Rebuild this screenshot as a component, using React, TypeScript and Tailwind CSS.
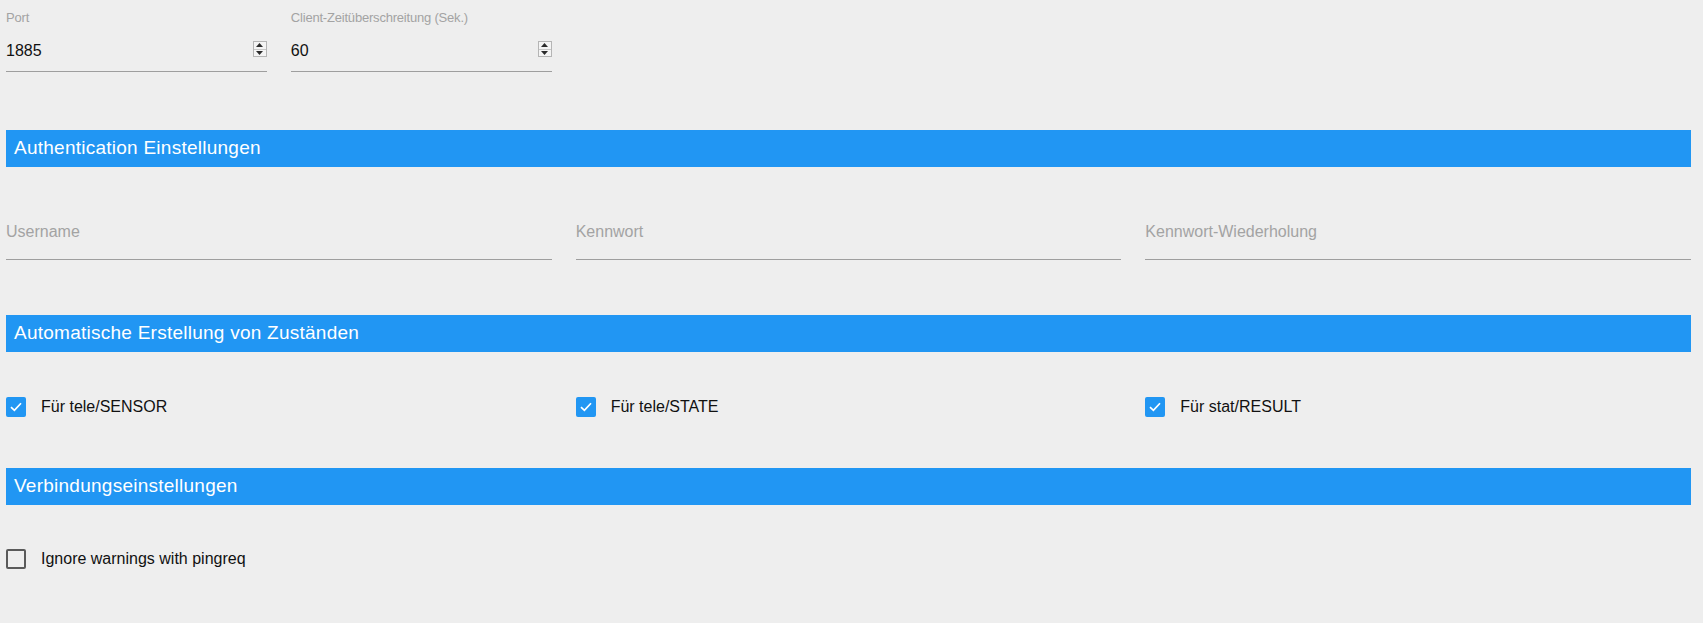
const font = { fontFamily: '"Liberation Sans", Arial, sans-serif' };

const Spinner = () => (
    <div className="flex flex-col w-[14px] h-[16px] border border-[#b5b5b5] bg-[#f4f4f4] -mt-[4px]">
        <div className="flex-1 flex items-center justify-center border-b border-[#c8c8c8]">
            <svg width="7" height="4" viewBox="0 0 7 4"><path d="M3.5 0 L7 4 L0 4 Z" fill="#2b2b2b" /></svg>
        </div>
        <div className="flex-1 flex items-center justify-center">
            <svg width="7" height="4" viewBox="0 0 7 4"><path d="M0 0 L7 0 L3.5 4 Z" fill="#2b2b2b" /></svg>
        </div>
    </div>
);

const NumberField = ({ label, value }: { label: string; value: string }) => (
    <div className="pt-[10px]">
        <div className="text-[13px] leading-[16px] text-[#a3a3a3] tracking-[-0.2px]">{label}</div>
        <div className="mt-[13px] pb-[8px] border-b border-[#9e9e9e] flex items-center justify-between h-[33px]">
            <span className="text-[16px] leading-[24px] text-[#111]">{value}</span>
            <Spinner />
        </div>
    </div>
);

const TextField = ({ label }: { label: string }) => (
    <div className="pb-[17px] border-b border-[#9e9e9e]">
        <div className="text-[16px] leading-[20px] text-[#a3a3a3]">{label}</div>
    </div>
);

const Header = ({ title }: { title: string }) => (
    <div className="h-[37px] bg-[#2196f3] flex items-center pl-[8px]">
        <span className="text-[19px] tracking-[0.25px] text-white">{title}</span>
    </div>
);

const Checkbox = ({ checked, label }: { checked: boolean; label: string }) => (
    <div className="flex items-center h-[24px] gap-[15px]">
        {checked ? (
            <div className="w-[20px] h-[20px] rounded-[2px] bg-[#2196f3] flex items-center justify-center">
                <svg width="14" height="12" viewBox="0 0 14 12">
                    <path d="M2 6.2 L5.4 9.4 L12 2.2" fill="none" stroke="white" strokeWidth="1.7" />
                </svg>
            </div>
        ) : (
            <div className="w-[20px] h-[20px] rounded-[2px] border-2 border-[#5a5a5a]" />
        )}
        <span className="text-[16px] text-[#111]">{label}</span>
    </div>
);

export default function App() {
    return (
        <div className="w-[1703px] h-[623px] bg-[#eeeeee] pl-[6px] pr-[12px] overflow-hidden" style={font}>
            <div className="grid grid-cols-6 gap-6">
                <NumberField label="Port" value="1885" />
                <NumberField label="Client-Zeitüberschreitung (Sek.)" value="60" />
            </div>

            <div className="mt-[58px]">
                <Header title="Authentication Einstellungen" />
            </div>
            <div className="mt-[55px] grid grid-cols-3 gap-6">
                <TextField label="Username" />
                <TextField label="Kennwort" />
                <TextField label="Kennwort-Wiederholung" />
            </div>

            <div className="mt-[55px]">
                <Header title="Automatische Erstellung von Zuständen" />
            </div>
            <div className="mt-[43px] grid grid-cols-3 gap-6">
                <Checkbox checked label="Für tele/SENSOR" />
                <Checkbox checked label="Für tele/STATE" />
                <Checkbox checked label="Für stat/RESULT" />
            </div>

            <div className="mt-[49px]">
                <Header title="Verbindungseinstellungen" />
            </div>
            <div className="mt-[42px]">
                <Checkbox checked={false} label="Ignore warnings with pingreq" />
            </div>
        </div>
    );
}
